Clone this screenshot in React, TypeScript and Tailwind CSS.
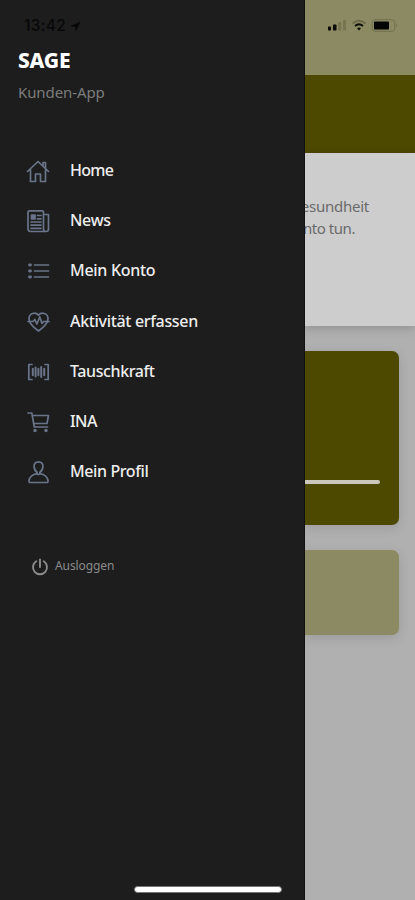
import React from 'react';

interface MenuItem {
  label: string;
  tracking: string;
  icon: React.ReactNode;
}

const MENU_ITEMS: MenuItem[] = [
  {
    label: 'Home',
    tracking: 'tracking-[-0.7px]',
    icon: (
      <path d="M1.500 12.500 12 2.500l10.500 10M17 7V3.500h2.500v6M4.500 10.500v12h5v-7.500h5v7.500h5v-12" />
    ),
  },
  {
    label: 'News',
    tracking: 'tracking-[-0.3px]',
    icon: (
      <>
        <path d="M17.500 20V3.200Q17.500 1.800 16 1.800H3.500Q2 1.800 2 3.300v16.500q0 2.700 2.700 2.700h15.600q2.200 0 2.200-2.200V5.500h-5M17.500 20q0 2.500 2.500 2.500" />
        <path d="M11.500 6.500h3.500M11.500 9.800h3.500M5 13h10M5 16.200h10M5 19.400h10" />
        <path d="M5.500 6h3.500v4h-3.500z" fill="currentColor" />
      </>
    ),
  },
  {
    label: 'Mein Konto',
    tracking: 'tracking-[-0.3px]',
    icon: (
      <>
        <path d="M8.500 6h14M8.500 12h14M8.500 18h14" />
        <path d="M3.500 6h1M3.500 12h1M3.500 18h1" strokeWidth="2.800" />
      </>
    ),
  },
  {
    label: 'Aktivität erfassen',
    tracking: 'tracking-[-0.33px]',
    icon: (
      <>
        <path d="M12.500 21C7.500 17.500 3 14 3 8.800 3 2.800 9.800 1.800 12.500 5.300 15.200 1.800 22 2.800 22 8.800 22 14 17.500 17.500 12.500 21Z" />
        <path d="M2 11.500h5l1.800-2 2 4.500 3-7 2.200 6.500 1.500-2h5.500" />
      </>
    ),
  },
  {
    label: 'Tauschkraft',
    tracking: 'tracking-[-0.4px]',
    icon: (
      <>
        <path d="M6 4.500H2.800v15H6M19 4.500h3.200v15H19" />
        <path d="M6.800 8.800v6.500M9.600 7.500v9M12.400 8.800v6.500M15.200 7v10M18.200 8.800v6.500" strokeWidth="2" />
      </>
    ),
  },
  {
    label: 'INA',
    tracking: 'tracking-[-0.6px]',
    icon: (
      <>
        <path d="M2 3h3.800l2.500 14h13.200M6.200 5.500h16.300l-1.500 8H7.700" />
        <circle cx="9" cy="20.500" r=".9" fill="currentColor" />
        <circle cx="20" cy="20.500" r=".9" fill="currentColor" />
      </>
    ),
  },
  {
    label: 'Mein Profil',
    tracking: 'tracking-[-0.4px]',
    icon: (
      <path d="M12.500 1.800c-3 0-4.600 2-4.400 4.800.1 2.600 1.400 4.600 3 5.600v1.300c-4 .8-7.400 3-8.100 7-.2 1.300.3 2 1.300 2h16.400c1 0 1.500-.7 1.300-2-.7-4-4.100-6.200-8.100-7v-1.300c1.600-1 2.900-3 3-5.600.2-2.800-1.400-4.800-4.400-4.800ZM9.800 13.800q2.700 1 5.400 0" />
    ),
  },
];

const StatusIcons: React.FC = () => (
  <svg className="ml-[22px] mt-[17px] h-4 w-[74px]" viewBox="0 0 74 16">
    <rect x="1" y="9.500" width="3" height="4" rx=".7" fill="#0b0b07" />
    <rect x="6" y="7.500" width="3.500" height="6" rx=".7" fill="#0b0b07" />
    <rect x="11.200" y="5" width="3" height="8.500" rx=".7" fill="#75754f" />
    <rect x="16" y="3" width="3" height="10.500" rx=".7" fill="#75754f" />
    <g fill="none" strokeWidth="1.700">
      <path d="M25.500 6.500q6.500-5.500 13 0" stroke="#6c6c48" />
      <path d="M28 9q4-3.500 8 0" stroke="#0b0b07" />
    </g>
    <path d="m30 11.200 2 2.300 2-2.300q-2-1.300-4 0Z" fill="#0b0b07" />
    <rect x="45.200" y="2.700" width="22.600" height="11.600" rx="3" fill="none" stroke="#717150" />
    <rect x="47" y="4.500" width="15" height="8" rx="1" fill="#050503" />
    <path d="M69.200 6.200v4q2-2 0-4Z" fill="#717150" />
  </svg>
);

const Drawer: React.FC = () => (
  <aside className="flex h-full w-[305px] shrink-0 flex-col border-r border-[#111111] bg-[#1d1d1d]">
    <div className="flex h-[46px] items-center gap-1 pl-6 pt-[6px] text-[#080808]">
      <span className="font-['Inter'] text-[15.5px] font-medium leading-5 tracking-[0.3px]">13:42</span>
      <svg className="h-[11px] w-[11px]" viewBox="0 0 12 12" fill="currentColor">
        <path d="M11.500.5.500 5.500l5 1 1 5Z" />
      </svg>
    </div>
    <div className="pl-[18px]">
      <h1 className="pt-[2px] text-[21px] font-extrabold leading-6 tracking-[-0.2px] text-white">SAGE</h1>
      <p className="pt-[9px] text-[15px] leading-[22px] tracking-[-0.1px] text-[#7c7c7c]">Kunden-App</p>
    </div>
    <nav className="mt-[42px] flex flex-col">
      {MENU_ITEMS.map((item) => (
        <a key={item.label} className="flex h-[50.2px] items-center pl-[26px]">
          <svg
            className="mt-[2px] h-6 w-6 text-[#697489]"
            viewBox="0 0 24 24"
            fill="none"
            stroke="currentColor"
            strokeWidth="1.700"
            strokeLinecap="round"
            strokeLinejoin="round"
          >
            {item.icon}
          </svg>
          <span className={`ml-5 text-[16px] font-medium text-[#eeeeee] ${item.tracking}`}>{item.label}</span>
        </a>
      ))}
    </nav>
    <button className="mt-[59px] flex items-center gap-[6px] pl-[31px] text-[#8b8b8b]">
      <svg
        className="mt-[3px] h-[18px] w-[18px]"
        viewBox="0 0 18 18"
        fill="none"
        stroke="currentColor"
        strokeWidth="1.900"
        strokeLinecap="round"
      >
        <path d="M9 1.500V9M5.300 3.300a7 7 0 1 0 7.400 0" />
      </svg>
      <span className="text-[12px] leading-5 tracking-[-0.1px]">Ausloggen</span>
    </button>
    <div className="mb-[7px] ml-[134px] mt-auto h-[7px] w-[148px] rounded-full border border-[#777777] bg-white" />
  </aside>
);

const DimmedPage: React.FC = () => (
  <main className="flex min-w-0 flex-1 flex-col overflow-hidden bg-[#b0b0b0]">
    <div className="h-[75px] shrink-0 bg-[#8c8a62]">
      <StatusIcons />
    </div>
    <div className="h-[78px] shrink-0 bg-[#4d4900]" />
    <section className="flex h-[173px] shrink-0 flex-col items-end bg-[#cdcdcd] pt-[42px] text-[15px] leading-[22px] text-[#6a6a6a] shadow-[0_2px_10px_rgba(0,0,0,0.2)]">
      <p className="mr-[46px] whitespace-nowrap tracking-[-0.25px]">esundheit</p>
      <p className="mr-[60px] whitespace-nowrap tracking-[-0.45px]">nto tun.</p>
    </section>
    <section className="mr-4 mt-[25px] h-[174px] shrink-0 rounded-r-[7px] bg-[#4d4900] pt-[129px] shadow-[0_3px_12px_rgba(0,0,0,0.12)]">
      <div className="mr-[19px] h-1 rounded-r-sm bg-[#cbc7ba]" />
    </section>
    <section className="mr-4 mt-[25px] h-[85px] shrink-0 rounded-r-[7px] bg-[#8c8a62] shadow-[0_3px_12px_rgba(0,0,0,0.12)]" />
  </main>
);

const App: React.FC = () => (
  <div className="flex h-[900px] w-full overflow-hidden bg-[#b0b0b0] font-['Noto_Sans','Open_Sans',sans-serif]">
    <Drawer />
    <DimmedPage />
  </div>
);

export default App;
